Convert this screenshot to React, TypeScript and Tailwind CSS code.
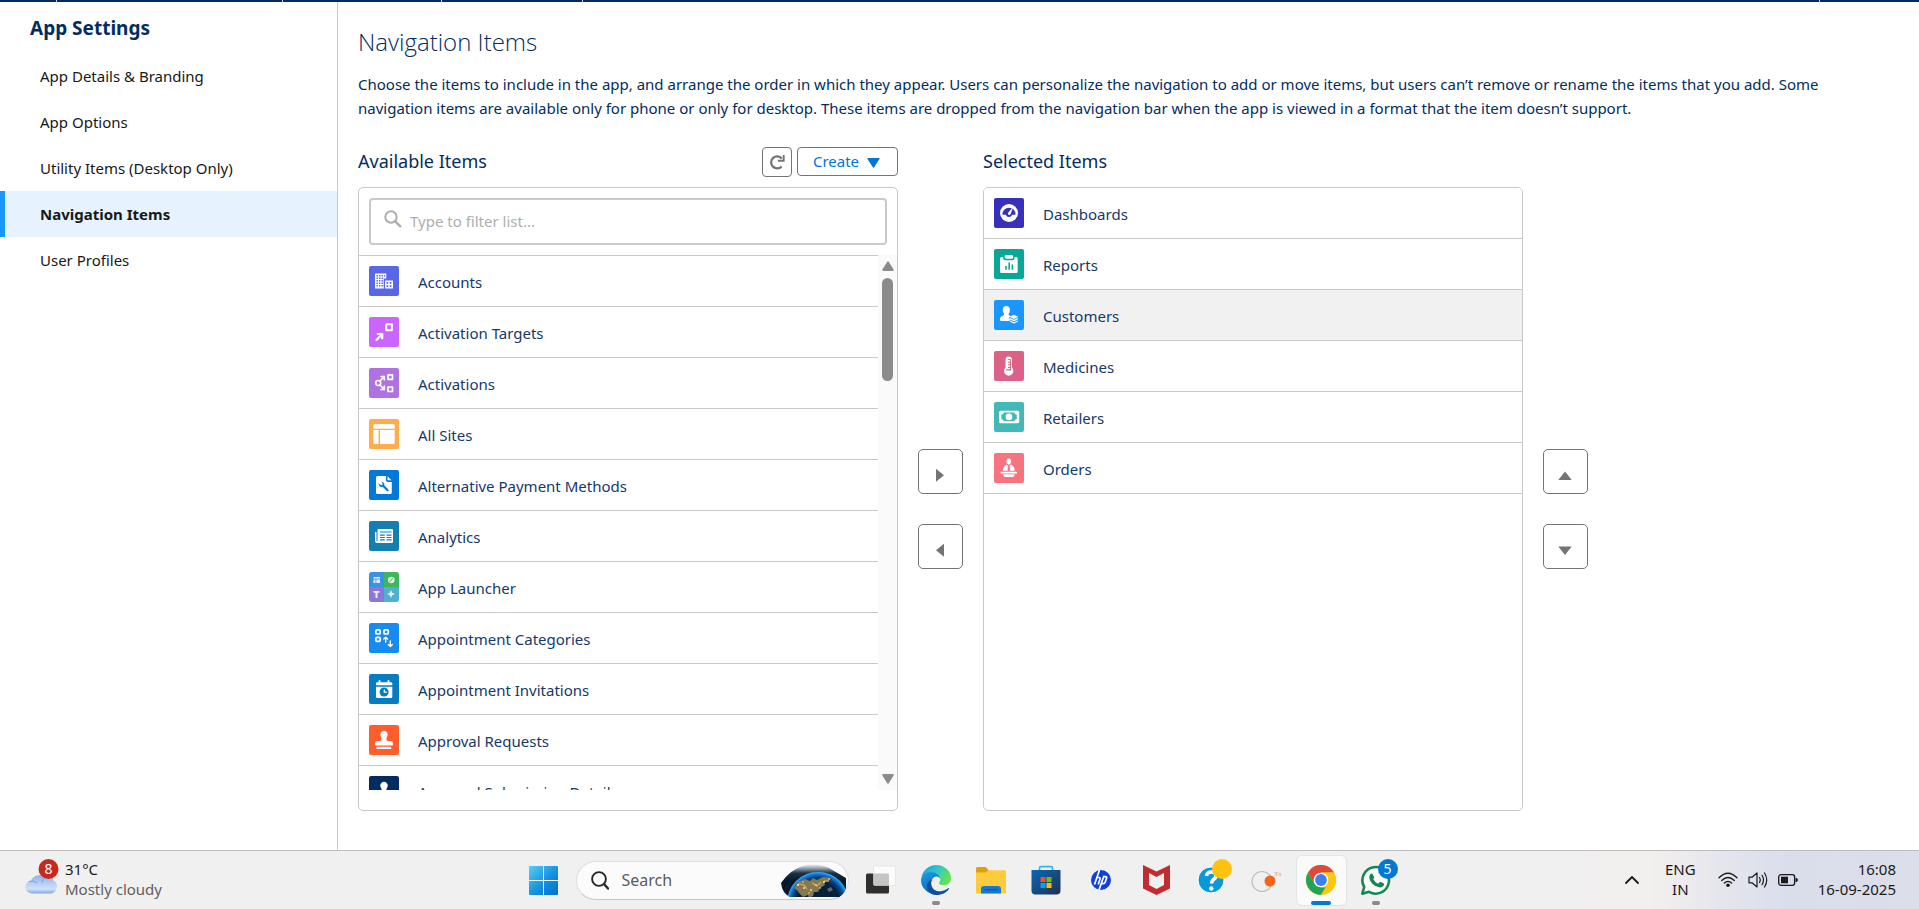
import type { ReactNode } from "react";

type Item = { label: string; tile: string; glyph: ReactNode; active?: boolean };

const W = "#fff";

const accountGlyph = (
  <>
    <path d="M6.500 7.500h10.300q.5 0 .5.5v4.500h-2.600V22.500H6.500Q6 22.500 6 22V8q0-.5.5-.5z" fill={W} />
    <rect x="16" y="14.500" width="8" height="8" rx=".5" fill={W} />
    <g fill="#5867e8">
      {[9, 11.5, 14, 16.5, 19].map((y) =>
        [7.5, 10, 12.5].map((x) => <rect key={`${x}-${y}`} x={x} y={y} width="1.4" height="1.5" />),
      )}
      <rect x="15" y="9" width="1.2" height="1.5" />
      <rect x="17.5" y="16" width="1.7" height="1.8" />
      <rect x="20.700" y="16" width="1.7" height="1.8" />
      <rect x="17.5" y="19.2" width="1.7" height="1.8" />
      <rect x="20.700" y="19.2" width="1.7" height="1.8" />
    </g>
  </>
);

const targetGlyph = (
  <g fill="none" stroke={W} strokeWidth="1.9" strokeLinejoin="round" strokeLinecap="round">
    <rect x="17.2" y="7.2" width="5.7" height="6" />
    <path strokeWidth="2.2" d="M7.500 23 13 17.300M8.800 17H13.200V21.300" />
  </g>
);

const activationGlyph = (
  <g fill="none" stroke={W} strokeWidth="1.7" strokeLinejoin="round" strokeLinecap="round">
    <circle cx="9.2" cy="15" r="2.5" />
    <path d="M11 13l4.200-4.500M12 8.500h3.300v3.300M11 17l4.200 4.500M12 21.500h3.300v-3.300" />
    <rect x="19" y="6.800" width="4.5" height="4.5" />
    <rect x="19" y="19" width="4.5" height="4.5" />
  </g>
);

const sitesGlyph = (
  <g fill={W}>
    <path d="M5.800 5h18.400q1.500 0 1.500 1.500V9.700H4.300V6.500Q4.300 5 5.800 5z" />
    <path d="M4.300 11h5.300v14H5.800q-1.500 0-1.500-1.500z" />
    <path d="M11 11h14.700v12.500q0 1.500-1.500 1.500H11z" />
  </g>
);

const paymentGlyph = (
  <>
    <path d="M8.500 6h8.500v4.200q0 1.800 1.800 1.800h4v10.500q0 1.500-1.500 1.500H8.500Q7 24 7 22.500v-15Q7 6 8.500 6z" fill={W} />
    <path d="M18.500 6.200 22.500 10.200H19.200q-.7 0-.7-.7z" fill={W} />
    <path
      d="M12.400 11.700q2.100.1 2.800 1.800.3.800 0 1.700l4.200 4.300q.5.800-.1 1.400-.7.600-1.400 0l-4.300-4.200q-1.600.6-3-.5-1.300-1.300-.9-2.900l1.900 1.800 1.800-.2.200-1.700z"
      fill="#0279d8"
    />
  </>
);

const analyticsGlyph = (
  <>
    <path d="M9.500 8h13.300q1.200 0 1.200 1.200v11.600q0 1.200-1.200 1.200H8q-2 0-2-2v-8.500q0-.7.700-.7t.8.7V20h1V9q0-1 1-1z" fill={W} />
    <path d="M11 11h11.500M11 14.200h4.800M17.500 14.200h5M11 16.500h4.800M17.500 16.500h5M11 18.900h4.800M17.500 18.900h5" stroke="#147fb0" strokeWidth="1.2" />
  </>
);

const launcherGlyph = (
  <>
    <path d="M2 0h13v15H0V2Q0 0 2 0z" fill="#3a93e2" />
    <path d="M15 0h13q2 0 2 2v13H15z" fill="#3fb65a" />
    <path d="M0 15h15v15H2q-2 0-2-2z" fill="#8d76d4" />
    <path d="M15 15h15v13q0 2-2 2H15z" fill="#4fb0cf" />
    <g fill={W} opacity=".85">
      <rect x="4.5" y="5" width="6.5" height="1.6" />
      <rect x="4.5" y="7.5" width="2" height="3.5" />
      <rect x="7.3" y="7.5" width="3.7" height="3.5" />
      <circle cx="22.3" cy="8" r="3.3" />
      <path d="M4.500 19h6v1.800H8.500V26h-2v-5.200h-2z" />
      <path d="M22 18l1.200 2.800L26 22l-2.800 1.200L22 26l-1.200-2.800L18 22l2.800-1.200z" />
    </g>
    <path d="M20.500 10l3.500-4" stroke="#3fb65a" strokeWidth="1" />
  </>
);

const categoryGlyph = (
  <g fill="none" stroke={W} strokeWidth="1.7" strokeLinecap="round" strokeLinejoin="round">
    <rect x="6.9" y="6.9" width="4.3" height="4" rx="1" />
    <rect x="15" y="6.9" width="4.3" height="4" rx="1" />
    <rect x="6.9" y="14.3" width="4.3" height="4" rx="1" />
    <path strokeWidth="1.4" d="M16.700 19.200v-4.700M14.800 16.100l1.900-1.900 1.900 1.900M21.300 18v5.200M19.300 21.400l2 2 2-2" />
  </g>
);

const invitationGlyph = (
  <>
    <g fill={W}>
      <path d="M8.200 8.300h13.900q1.200 0 1.200 1.200v1.800H7V9.500q0-1.200 1.200-1.200z" />
      <rect x="9.5" y="6" width="2" height="4" rx="1" />
      <rect x="18.5" y="6" width="2" height="4" rx="1" />
      <path d="M7 12.700h16.300v9.800q0 1.500-1.500 1.500H8.500Q7 24 7 22.500z" />
    </g>
    <circle cx="15.1" cy="18" r="4.5" fill="#067dc3" />
    <path d="M15.300 15.500v2.600h2.500" stroke={W} strokeWidth="1.2" fill="none" />
  </>
);

const stampGlyph = (
  <g fill={W}>
    <path d="M15 5.800a3.700 3.700 0 0 1 3.200 5.600q-1.200 1.900-.7 3.700.3 1 1.500 1h2.500q2.500 0 2.500 2.300v1.200q0 .9-1 .9H7q-1 0-1-.9v-1.200q0-2.300 2.500-2.300H11q1.200 0 1.500-1 .5-1.800-.7-3.700A3.700 3.700 0 0 1 15 5.800z" />
    <rect x="7.3" y="21.700" width="15" height="2.4" rx=".9" />
  </g>
);

const dashboardGlyph = (
  <>
    <circle cx="15" cy="15" r="9" fill={W} />
    <path d="M8.500 16.200A6.500 6.500 0 1 1 21.500 16.200q-.1.500-.6.500h-2.700a3.400 3.400 0 0 1-6.400 0H9.100q-.5 0-.6-.5z" fill="#3630ba" />
    <path d="M17.700 10.600q.9.300.6 1.200l-1.700 4.100q-.7 1.400-2 .9-1.200-.8-.5-2.100z" fill={W} />
  </>
);

const reportGlyph = (
  <>
    <path d="M7.500 8h1.700v1.300q0 2 2 2h7.300q2 0 2-2V8h1.700q1.500 0 1.500 1.500v13q0 1.500-1.500 1.500H7.500Q6 24 6 22.500v-13Q6 8 7.500 8z" fill={W} />
    <rect x="10.800" y="6" width="8.2" height="3.7" rx="1.2" fill={W} />
    <path d="M11.900 17v3.700M15.200 13.500v7.200M18.400 15.500v5.200" stroke="#08a798" strokeWidth="1.6" />
  </>
);

const customerGlyph = (
  <g fill={W}>
    <path d="M12.300 6q3.600 0 3.600 4 0 2.300-1.200 3.700-.6 1.200.7 1.800 1.200.5 1 1-1.200.7-1.200 1.700l.8 1-.5 1.200.3.600H7.200q-1.200 0-1.200-1.200v-1.300q0-1.800 2.500-2.700 2.200-.8 1.500-2.100Q8.700 12.300 8.700 10q0-4 3.600-4z" />
    <path d="M19.900 14.700l4.300 2.100-4.300 2.200-4.300-2.200z" />
    <path d="M15.900 18.600l4 2 4-2M15.900 21l4 2 4-2" fill="none" stroke={W} strokeWidth="1.2" strokeLinejoin="round" />
  </g>
);

const medicineGlyph = (
  <>
    <path d="M14.700 5.500q3.200 0 3.200 3.200v7.800a4.700 4.700 0 1 1-6.400 0V8.700q0-3.200 3.200-3.200z" fill={W} />
    <path d="M14.200 8.500h2.200v10.500M14 11.200h2.400M14 13.900h2.400M14 16.500h2.400" stroke="#dd6086" strokeWidth="1" fill="none" />
    <path d="M12.300 18.300h4.800v1.200h-4.800z" fill="#dd6086" />
  </>
);

const retailerGlyph = (
  <>
    <rect x="5" y="8.700" width="20.2" height="12.5" rx="1.5" fill={W} />
    <path d="M9.800 10.600h10.500q.3 1.700 2.500 2.200v4.300q-2.200.5-2.500 2.200H9.800q-.3-1.700-2.500-2.200v-4.300q2.200-.5 2.500-2.200z" fill="#44b8b7" />
    <circle cx="15" cy="14.900" r="3.3" fill={W} />
  </>
);

const orderGlyph = (
  <g fill={W}>
    <path d="M14.800 5.500a2.700 2.900 0 0 1 1.400 5.200l-1.400 1-1.400-1a2.700 2.900 0 0 1 1.400-5.200z" />
    <path d="M12.500 11.500q.6.500 1.500 1l-.5 4.500.6.700H9q0-4.200 3.500-6.200zM17.100 11.500q-.6.500-1.500 1l.5 4.500-.6.700h5.100q0-4.200-3.500-6.200z" />
    <rect x="6.700" y="18.700" width="16.3" height="1.9" rx=".6" />
    <path d="M8.800 21.300h12.100l-1 2q-.3.700-1.100.7h-7.900q-.8 0-1.100-.7z" />
  </g>
);

const available: Item[] = [
  { label: "Accounts", tile: "bg-[#5867e8]", glyph: accountGlyph },
  { label: "Activation Targets", tile: "bg-[#cb65ff]", glyph: targetGlyph },
  { label: "Activations", tile: "bg-[#b072e2]", glyph: activationGlyph },
  { label: "All Sites", tile: "bg-[#ffac4c]", glyph: sitesGlyph },
  { label: "Alternative Payment Methods", tile: "bg-[#0279d8]", glyph: paymentGlyph },
  { label: "Analytics", tile: "bg-[#147fb0]", glyph: analyticsGlyph },
  { label: "App Launcher", tile: "bg-white", glyph: launcherGlyph },
  { label: "Appointment Categories", tile: "bg-[#178bf0]", glyph: categoryGlyph },
  { label: "Appointment Invitations", tile: "bg-[#067dc3]", glyph: invitationGlyph },
  { label: "Approval Requests", tile: "bg-[#ff5d2d]", glyph: stampGlyph },
  { label: "Approval Submission Details", tile: "bg-[#032d60]", glyph: stampGlyph },
];

const selected: Item[] = [
  { label: "Dashboards", tile: "bg-[#3630ba]", glyph: dashboardGlyph },
  { label: "Reports", tile: "bg-[#08a798]", glyph: reportGlyph },
  { label: "Customers", tile: "bg-[#1b96ff]", glyph: customerGlyph, active: true },
  { label: "Medicines", tile: "bg-[#dd6086]", glyph: medicineGlyph },
  { label: "Retailers", tile: "bg-[#44b8b7]", glyph: retailerGlyph },
  { label: "Orders", tile: "bg-[#f7737f]", glyph: orderGlyph },
];

const settings = ["App Details & Branding", "App Options", "Utility Items (Desktop Only)", "Navigation Items", "User Profiles"];

function ItemRow({ item }: { item: Item }) {
  return (
    <li className={`flex h-[51px] shrink-0 items-center gap-[19px] border-b border-[#c9c9c9] px-2.5 ${item.active ? "bg-[#f1f1f1]" : "bg-white"}`}>
      <svg viewBox="0 0 30 30" className={`size-[30px] shrink-0 rounded-[2px] ${item.tile}`} aria-hidden="true">
        {item.glyph}
      </svg>
      <span className="truncate pt-0.5 text-[15px] leading-5 text-[#14396b]">{item.label}</span>
    </li>
  );
}

function MoveButton({ label, path }: { label: string; path: string }) {
  return (
    <button type="button" aria-label={label} className="flex size-[45px] items-center justify-center rounded-[5px] border border-[#747474] bg-white pt-1.5 pr-0.5">
      <svg viewBox="0 0 14 14" className="size-3.5" aria-hidden="true">
        <path d={path} fill="#747474" />
      </svg>
    </button>
  );
}

function Sidebar() {
  return (
    <aside className="w-[338px] shrink-0 border-r border-[#c9c9c9] pt-2.5">
      <h2 className="px-[30px] text-[19px] leading-8 font-bold text-[#032d60]">App Settings</h2>
      <nav className="mt-[9px] flex flex-col">
        {settings.map((s) => {
          const on = s === "Navigation Items";
          return (
            <a
              key={s}
              href="#"
              aria-current={on ? "page" : undefined}
              className={`flex h-[46px] items-center border-l-[5px] pl-[35px] text-[15px] text-[#181818] ${on ? "border-[#1b96ff] bg-[#e6f3fe] font-bold" : "border-transparent"}`}
            >
              {s}
            </a>
          );
        })}
      </nav>
    </aside>
  );
}

function Main() {
  return (
    <main className="min-w-0 flex-1 px-5 pt-[22px] pb-[38px]">
      <h1 className="font-['Open_Sans','Noto_Sans',sans-serif] text-[24px] leading-9 font-light text-[#032d60]">Navigation Items</h1>
      <p className="mt-3 pr-10 text-[15px] leading-6 text-[#032d60]">
        Choose the items to include in the app, and arrange the order in which they appear. Users can personalize the navigation to add or move items, but users can’t remove or rename the items that you add. Some navigation items are available only for phone or only for desktop. These items are dropped from the navigation bar when the app is viewed in a format that the item doesn’t support.
      </p>
      <div className="mt-[27px] flex gap-5">
        <section className="max-w-[540px] min-w-0 flex-1">
          <div className="flex h-10 items-start gap-[5px]">
            <h2 className="flex-1 text-[18px] leading-7 text-[#032d60]">Available Items</h2>
            <button type="button" aria-label="Refresh" className="flex size-[30px] items-center justify-center rounded-[4px] border border-[#747474] bg-white">
              <svg viewBox="0 0 16 16" className="size-4" fill="none" stroke="#747474" strokeWidth="2.2" aria-hidden="true">
                <path d="M12.600 12.400A6 6 0 1 1 12.800 4.600" />
                <path d="M14.700 .9v5.800H8.900" strokeWidth="1.9" />
              </svg>
            </button>
            <button type="button" className="flex h-[29px] w-[101px] items-center justify-center gap-2 rounded-[4px] border border-[#747474] bg-white pr-0.5 text-[15px] text-[#0176d3]">
              Create
              <svg viewBox="0 0 13 10" className="mt-0.5 h-2.5 w-[13px]" aria-hidden="true">
                <path d="M.8 0h11.400q.9 0 .4.800L7 9.600q-.5.600-1 0L.4.800Q-.1 0 .8 0z" fill="#0176d3" />
              </svg>
            </button>
          </div>
          <div className="flex h-[624px] flex-col rounded-[5px] border border-[#c9c9c9] bg-white pb-5">
            <div className="p-2.5">
              <div className="flex h-[47px] items-center gap-2 rounded-[4px] border-2 border-[#c9c9c9] px-[13px]">
                <svg viewBox="0 0 18 18" className="mb-1.5 size-[18px]" fill="none" stroke="#aeaeae" aria-hidden="true">
                  <circle cx="7" cy="7" r="5.700" strokeWidth="2" />
                  <path d="M11.300 11.300l5 5" strokeWidth="2.4" strokeLinecap="round" />
                </svg>
                <input type="text" aria-label="Filter available items" placeholder="Type to filter list..." className="min-w-0 flex-1 bg-transparent text-[15px] text-[#181818] outline-none placeholder:text-[#aeaeae]" />
              </div>
            </div>
            <div className="flex min-h-0 flex-1">
              <ul className="flex min-w-0 flex-1 flex-col overflow-hidden border-t border-[#c9c9c9]">
                {available.map((item) => (
                  <ItemRow key={item.label} item={item} />
                ))}
              </ul>
              <div className="flex w-[19px] flex-col items-center bg-[#fafafa] py-1.5" aria-hidden="true">
                <svg viewBox="0 0 12 10" className="h-2.5 w-3">
                  <path d="M5.200.8q.8-1 1.600 0l4.700 7.400q.8 1.600-.8 1.800H1.300Q-.3 9.800.5 8.200z" fill="#8b8b8b" />
                </svg>
                <div className="mt-[7px] h-[103px] w-[11px] rounded-full bg-[#8b8b8b]" />
                <svg viewBox="0 0 12 10" className="mt-auto h-2.5 w-3">
                  <path d="M5.200 9.200q.8 1 1.600 0l4.700-7.400Q12.300.2 10.700 0H1.300Q-.3.200.5 1.800z" fill="#8b8b8b" />
                </svg>
              </div>
            </div>
          </div>
        </section>
        <div className="flex flex-col gap-[30px] pt-[302px]">
          <MoveButton label="Move to selected items" path="M3 .800 11 7.300 3 13.800z" />
          <MoveButton label="Move to available items" path="M11 .800 3 7.300 11 13.800z" />
        </div>
        <section className="max-w-[540px] min-w-0 flex-1">
          <h2 className="h-10 text-[18px] leading-7 text-[#032d60]">Selected Items</h2>
          <ul className="flex h-[624px] flex-col overflow-hidden rounded-[5px] border border-[#c9c9c9] bg-white">
            {selected.map((item) => (
              <ItemRow key={item.label} item={item} />
            ))}
          </ul>
        </section>
        <div className="flex flex-col gap-[30px] pt-[302px]">
          <MoveButton label="Move up" path="M.3 12 7 3.500 13.700 12z" />
          <MoveButton label="Move down" path="M.3 3.500 7 12 13.700 3.500z" />
        </div>
      </div>
    </main>
  );
}

function Slot({ label, mark, active, children }: { label: string; mark?: string; active?: boolean; children: ReactNode }) {
  return (
    <button
      type="button"
      aria-label={label}
      className={`relative mx-[3px] flex h-[49px] w-[49px] items-center justify-center rounded-[5px] ${active ? "bg-[#fafafa] shadow-[0_0_1px_1px_#e4e4e4]" : ""}`}
    >
      {children}
      {mark && <span className={`absolute bottom-0 h-1 rounded-full ${mark}`} />}
    </button>
  );
}

function Earth() {
  return (
    <svg viewBox="0 0 65 33" className="h-[33px] w-[65px]" aria-hidden="true">
      <defs>
        <clipPath id="eye">
          <path d="M0 19Q10 5 22 2 34-2 48 4L65 14V24Q63 30 58 33H9Q1 29 0 19z" />
        </clipPath>
        <linearGradient id="sky" x1="0" y1="0" x2="0" y2="1">
          <stop offset="0" stopColor="#f4f6f8" />
          <stop offset=".12" stopColor="#9fabb6" />
          <stop offset=".28" stopColor="#1c3043" />
          <stop offset=".5" stopColor="#04192b" />
        </linearGradient>
        <radialGradient id="globe" cx=".5" cy=".5" r=".5">
          <stop offset=".7" stopColor="#06213d" />
          <stop offset=".84" stopColor="#0a4585" />
          <stop offset=".95" stopColor="#1687e0" />
          <stop offset="1" stopColor="#43b9ff" />
        </radialGradient>
      </defs>
      <g clipPath="url(#eye)">
        <rect width="65" height="33" fill="url(#sky)" />
        <circle cx="37" cy="39" r="31" fill="url(#globe)" />
        <path d="M13 24l4-6 7-3 5 2 3-3 4 2 6-3 8 1-2 3-5 1 1 3-5 3-2 4-4 0-1 4-4 2-1-3-5 2-4-4-2-3z" fill="#85794f" />
        <path d="M17 20l6 1 3 4M31 19l5 3 4-4M43 17l5 0" stroke="#d0ad69" strokeWidth="1.6" fill="none" opacity=".8" />
        <path d="M46 25l4-2 2 3-4 2z" fill="#5f6a5c" />
        <g fill="#ffe7a0">
          <circle cx="17" cy="21" r="1" /><circle cx="23" cy="24" r=".9" /><circle cx="22" cy="18" r=".7" />
          <circle cx="30" cy="26" r=".9" /><circle cx="35" cy="21" r=".8" /><circle cx="39" cy="24" r=".8" />
          <circle cx="43" cy="18" r="1" /><circle cx="48" cy="15" r=".8" /><circle cx="28" cy="29" r=".7" />
        </g>
      </g>
    </svg>
  );
}

function Taskbar() {
  return (
    <footer className="grid h-[59px] shrink-0 grid-cols-[1fr_auto_1fr] items-center border-t border-[#bcbcbc] bg-[linear-gradient(90deg,#f0f0f0_0%,#f0f0f0_80%,#f2efee_86%,#dadeec_93%,#dcdee9_100%)]">
      <button type="button" className="flex items-center justify-self-start pl-[25px] text-left text-[15px] leading-5">
        <svg viewBox="0 0 40 42" className="h-[42px] w-10" aria-hidden="true">
          <defs>
            <linearGradient id="cloud" x1="0" y1="0" x2="0" y2="1">
              <stop offset="0" stopColor="#8fb1ea" />
              <stop offset=".75" stopColor="#cfe2fa" />
              <stop offset="1" stopColor="#86a6e4" />
            </linearGradient>
          </defs>
          <circle cx="22.500" cy="17" r="6" fill="#f48a1c" />
          <path d="M6.500 34.500a6.500 6.500 0 0 1-.7-12.900A10 10 0 0 1 20.500 18q6.500-1.700 8 3.500a7 7 0 0 1-4 13z" fill="url(#cloud)" />
          <path d="M4 22.500q5-1.500 8 1.500M17 23.500q1-5 6-5.500" stroke="#7fa2e0" strokeWidth="1" fill="none" />
          <circle cx="23.500" cy="10" r="10" fill="#c42b1c" />
          <text x="23.500" y="15" textAnchor="middle" fontSize="14" fill="#fff" fontFamily="Noto Sans, sans-serif">8</text>
        </svg>
        <span className="flex flex-col pb-0.5">
          <span className="text-[#1a1a1a]">31°C</span>
          <span className="text-[#5f5f5f]">Mostly cloudy</span>
        </span>
      </button>

      <div className="flex items-center">
        <Slot label="Start">
          <svg viewBox="0 0 29 29" className="size-[29px]" aria-hidden="true">
            <defs>
              <linearGradient id="win" x1="0" y1="0" x2="1" y2="1">
                <stop offset="0" stopColor="#56cdfb" />
                <stop offset=".55" stopColor="#1591dd" />
                <stop offset="1" stopColor="#0070cf" />
              </linearGradient>
            </defs>
            <path d="M1 0h13v14H0V1Q0 0 1 0zM15 0h13q1 0 1 1v13H15zM0 15h14v14H1q-1 0-1-1zM15 15h14v13q0 1-1 1H15z" fill="url(#win)" />
          </svg>
        </Slot>
        <label className="mx-[5px] flex h-[39px] w-[273px] items-center rounded-full border border-[#dedede] border-b-[#c8c8c8] bg-[#fbfbfb] pr-0.5 pl-3.5">
          <svg viewBox="0 0 18 19" className="mr-[13px] h-[19px] w-[18px] shrink-0" fill="none" stroke="#262626" strokeLinecap="round" aria-hidden="true">
            <circle cx="8" cy="8" r="6.900" strokeWidth="1.9" />
            <path d="M13 13l4 4.500" strokeWidth="2.4" />
          </svg>
          <input type="text" aria-label="Search" placeholder="Search" className="min-w-0 flex-1 bg-transparent text-[16px] outline-none placeholder:text-[#5c5c5c]" />
          <Earth />
        </label>
        <Slot label="Task view">
          <svg viewBox="0 0 30 30" className="size-[30px]" aria-hidden="true">
            <rect x="0" y="8.500" width="23" height="20" rx="1.500" fill="#2f2f2d" />
            <rect x="7.500" y="1" width="22" height="19.500" rx="1.500" fill="#fff" fillOpacity=".72" stroke="#dedede" strokeWidth=".6" />
          </svg>
        </Slot>
        <Slot label="Edge" mark="w-2 bg-[#8a8a8a]">
          <svg viewBox="0 0 30 30" className="size-[30px]" aria-hidden="true">
            <defs>
              <linearGradient id="edgeTop" x1="0" y1="0" x2="1" y2=".4">
                <stop offset="0" stopColor="#1d9fd8" />
                <stop offset=".5" stopColor="#2cc3d0" />
                <stop offset="1" stopColor="#63e354" />
              </linearGradient>
              <linearGradient id="edgeMid" x1="0" y1="0" x2=".5" y2="1">
                <stop offset="0" stopColor="#1ba0e0" />
                <stop offset="1" stopColor="#0c5fc0" />
              </linearGradient>
            </defs>
            <path d="M.3 13A15 15 0 0 1 15 0C24 0 30 6.500 30 13.200c0 4.300-3.200 7-7 7-3.600 0-5-1.300-5-2.300 0-.8 1.300-1.500 1.300-3.700C19.300 10 15.500 8 11 8 5 8 1 11 .3 13z" fill="url(#edgeTop)" />
            <path d="M.2 13.500C1.500 9 6 7 10.500 7.200c5 .2 8.800 3 8.800 7-.3-1.600-2-2.600-4-2.600-3 0-5 3.300-5 6.800 0 5 4 9.500 9.200 9.600-1.600 1.300-5 2-8 1C4 27-1 20.500.2 13.500z" fill="url(#edgeMid)" />
            <path d="M11.300 14.500c-1 1-2 3-1 6.300C12 25.500 17 27 21 26c3-.8 5-2 6-2.800.8-.6 1.200.3.700 1C25.500 27.500 21 30 15.500 30 9 30 5.500 25 6 20.500c.3-3.200 2.500-5.300 5.300-6z" fill="#114f9e" />
          </svg>
        </Slot>
        <Slot label="File Explorer">
          <svg viewBox="0 0 30 27" className="h-[27px] w-[30px]" aria-hidden="true">
            <path d="M1.500 0H9q1 0 1.600.8L12.500 3V8H0V1.500Q0 0 1.500 0z" fill="#dfa00f" />
            <path d="M0 5.500h9q1 0 1.500-.8l.7-.7Q12 3.300 13 3.300h15.500q1.500 0 1.500 1.500V26.500H0z" fill="#fdcb3c" />
            <path d="M5 26.500V22q0-3 3-3h14q3 0 3 3v4.500z" fill="#1678cf" />
            <path d="M9 22.800h12" stroke="#0b4f94" strokeWidth="1" strokeLinecap="round" />
          </svg>
        </Slot>
        <Slot label="Microsoft Store">
          <svg viewBox="0 0 30 30" className="size-[30px]" aria-hidden="true">
            <defs>
              <linearGradient id="store" x1="0" y1="0" x2="1" y2="1">
                <stop offset="0" stopColor="#0a68b8" />
                <stop offset="1" stopColor="#20304f" />
              </linearGradient>
            </defs>
            <path d="M8.500 6V3.200Q8.500 1.700 10 1.700h10q1.500 0 1.500 1.500V6" fill="none" stroke="#2bb9f2" strokeWidth="1.7" />
            <path d="M.5 5h29v20.500q0 4-4 4h-21q-4 0-4-4z" fill="url(#store)" />
            <rect x="9.500" y="12" width="5" height="5" fill="#f25022" />
            <rect x="15.500" y="12" width="5" height="5" fill="#7fba00" />
            <rect x="9.500" y="18" width="5" height="5" fill="#00a4ef" />
            <rect x="15.500" y="18" width="5" height="5" fill="#ffb900" />
          </svg>
        </Slot>
        <Slot label="HP">
          <svg viewBox="0 0 20 20" className="size-5" aria-hidden="true">
            <circle cx="10" cy="10" r="10" fill="#1140d8" />
            <g stroke="#fff" strokeWidth="1.7" fill="none">
              <path d="M8.500 0 3.500 14.500M6 7.500h2q1.500 0 1 1.500L7.200 14.500" />
              <path d="M13 5.800 8 20M12.500 6.700h2q1.500 0 1 1.500l-1.300 4q-.5 1.500-2 1.500h-1.600" />
            </g>
          </svg>
        </Slot>
        <Slot label="McAfee">
          <svg viewBox="0 0 27 30" className="h-[30px] w-[27px]" aria-hidden="true">
            <path d="M0 0l13.500 6.500L27 0v23.500L13.500 30 0 23.500zM6 8v12l7.500 4 7.500-4V8l-7.500 4z" fill="#c22c31" fillRule="evenodd" />
          </svg>
        </Slot>
        <Slot label="Help">
          <svg viewBox="0 0 42 42" className="size-[42px]" aria-hidden="true">
            <circle cx="21" cy="21" r="13" fill="#0a98d8" stroke="#fff" strokeWidth="1" />
            <path d="M16.500 17q.5-4 5-4t4.500 3.800q0 2-2.500 3.700-2 1.500-2 4" fill="none" stroke="#fff" strokeWidth="3.6" />
            <circle cx="21.300" cy="29.500" r="2.200" fill="#fff" />
            <circle cx="32" cy="10" r="10" fill="#ffc20e" />
          </svg>
        </Slot>
        <Slot label="3's">
          <svg viewBox="0 0 34 24" className="h-6 w-[34px]" aria-hidden="true">
            <circle cx="13" cy="13.500" r="10" fill="none" stroke="#bdbdbd" strokeWidth="1.2" />
            <circle cx="21" cy="13" r="5.500" fill="#f4651a" />
            <text x="25" y="8" fontSize="7" fill="#f08a5a" fontFamily="Liberation Serif, serif">3's</text>
          </svg>
        </Slot>
        <Slot label="Chrome" mark="w-5 bg-[#0078d4]" active>
          <svg viewBox="0 0 30 30" className="size-[30px]" aria-hidden="true">
            <circle cx="15" cy="15" r="15" fill="#fdc60f" />
            <path d="M2 7.500A15 15 0 0 1 28 7.500H15L8.500 18.700z" fill="#dc4a3d" />
            <path d="M2 7.500 8.500 18.700 15 22.500h6.500L14.500 30A15 15 0 0 1 2 7.500z" fill="#23a353" />
            <path d="M15 7.500H28A15 15 0 0 1 15 30l6.500-11.200z" fill="#fdc60f" />
            <circle cx="15" cy="15" r="7.300" fill="#fff" />
            <circle cx="15" cy="15" r="5.900" fill="#3c7ff0" />
          </svg>
        </Slot>
        <Slot label="WhatsApp" mark="w-2 bg-[#8a8a8a]">
          <svg viewBox="0 0 32 32" className="size-8" aria-hidden="true">
            <path d="M2.300 29.700 4.200 23A13.300 13.300 0 1 1 9 27.800z" fill="#fafafa" stroke="#178654" strokeWidth="2.6" strokeLinejoin="round" />
            <path d="M10.500 10q1-.8 2 0l1.600 3q.3.800-.9 2 1.500 3.300 5 4.800l1.600-1.700q.6-.4 1.200 0l2.700 1.500q.8.500.2 1.700-1.300 2.600-4.600 2-8.600-2-10-9.300-.2-2.600 1.200-4z" fill="#178654" />
          </svg>
          <span className="absolute top-[3px] right-[3px] flex size-5 items-center justify-center rounded-full bg-[#0078d4] text-[14px] leading-5 text-white">5</span>
        </Slot>
      </div>

      <div className="flex items-center justify-self-end pr-[23px] text-[15px] leading-5 text-[#1a1a1a]">
        <button type="button" aria-label="Show hidden icons">
          <svg viewBox="0 0 14 8" className="h-2 w-3.5" fill="none" stroke="#1a1a1a" strokeWidth="1.8" strokeLinecap="round" aria-hidden="true">
            <path d="M1 7l6-6 6 6" />
          </svg>
        </button>
        <button type="button" className="ml-[26px] flex flex-col items-center pb-0.5">
          <span>ENG</span>
          <span>IN</span>
        </button>
        <button type="button" aria-label="Network, volume and battery" className="ml-[22px] flex items-center gap-2.5">
          <svg viewBox="0 0 20 16" className="h-4 w-5" fill="none" stroke="#1a1a1a" strokeWidth="1.3" strokeLinecap="round" aria-hidden="true">
            <path d="M1 5.800Q10-3.300 19 5.800M3.700 8.500q6.300-6 12.600 0M6.300 11.100q3.700-3.400 7.400 0" />
            <circle cx="10" cy="13.300" r="1.8" fill="#1a1a1a" stroke="none" />
          </svg>
          <svg viewBox="0 0 20 18" className="h-[18px] w-5" fill="none" stroke="#1a1a1a" strokeWidth="1.2" strokeLinecap="round" strokeLinejoin="round" aria-hidden="true">
            <path d="M1 6.200h3L9 2v14l-5-4.200H1z" />
            <path d="M11.500 6.500q1.500 2.500 0 5M14 4.300q3 4.700 0 9.400M16.500 2q4.500 7 0 14" />
          </svg>
          <svg viewBox="0 0 20 12" className="h-3 w-5" aria-hidden="true">
            <rect x=".7" y=".7" width="15.900" height="10.600" rx="2.200" fill="none" stroke="#1a1a1a" strokeWidth="1.3" />
            <rect x="3" y="2.700" width="7" height="6.600" fill="#1a1a1a" />
            <path d="M17.500 3.800q2.500.3 2.500 2.200t-2.500 2.200z" fill="#1a1a1a" />
          </svg>
        </button>
        <button type="button" className="ml-5 flex flex-col items-end pb-0.5">
          <span>16:08</span>
          <span>16-09-2025</span>
        </button>
      </div>
    </footer>
  );
}

export default function App() {
  return (
    <div className="flex min-h-screen flex-col bg-white font-['Noto_Sans','Open_Sans',sans-serif]">
      <div className="flex h-0.5 shrink-0 bg-[#032d60]" aria-hidden="true">
        <div className="w-[57px] border-r border-[#c9d3e0]" />
        <div className="w-[226px] border-r border-[#c9d3e0]" />
        <div className="w-[159px] border-r border-[#c9d3e0]" />
        <div className="w-[141px] border-r border-[#c9d3e0]" />
        <div className="mr-[99px] flex-1 border-r border-[#c9d3e0]" />
      </div>
      <div className="flex flex-1">
        <Sidebar />
        <Main />
      </div>
      <Taskbar />
    </div>
  );
}
